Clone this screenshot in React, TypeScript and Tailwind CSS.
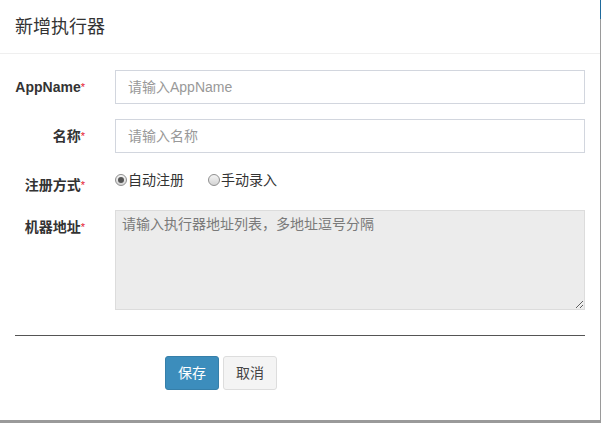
import { useState } from 'react'

const FONT = "font-['Liberation_Sans','Noto_Sans_CJK_SC',sans-serif]"

function Label({ text }: { text: string }) {
  return (
    <div className="w-[70px] shrink-0 pt-[7px] text-right text-[14px] font-bold leading-[20px] text-[#333]">
      {text}
      <span className="text-[#e3162f] text-[11px] align-top font-normal">*</span>
    </div>
  )
}

function Radio({ checked, label, onClick }: { checked: boolean; label: string; onClick: () => void }) {
  return (
    <button type="button" onClick={onClick} className="flex items-center text-[14px] text-[#333] leading-[20px]">
      <span className="w-[12px] h-[12px] rounded-full border border-[#8f8f8f] bg-gradient-to-b from-[#f4f4f4] to-[#d4d4d4] flex items-center justify-center mr-[1px]">
        {checked && <span className="w-[6px] h-[6px] rounded-full bg-[#555]" />}
      </span>
      {label}
    </button>
  )
}

export default function App() {
  const [mode, setMode] = useState<'auto' | 'manual'>('auto')

  return (
    <div className={`w-[601px] h-[423px] bg-white flex flex-col ${FONT}`}>
      <div className="flex flex-1 min-h-0">
        <div className="w-[600px] flex flex-col">
          {/* 标题 */}
          <div className="h-[54px] border-b border-[#efefef] px-[15px] flex items-center">
            <h4 className="text-[18px] text-[#333] leading-[20px] mt-[1px]">新增执行器</h4>
          </div>

          {/* 表单 */}
          <div className="px-[15px] pt-[16px]">
            <div className="flex gap-[30px]">
              <Label text="AppName" />
              <input
                className="flex-1 h-[34px] border border-[#d2d6de] px-[12px] text-[14px] text-[#555] placeholder:text-[#999] outline-none"
                placeholder="请输入AppName"
              />
            </div>
            <div className="flex gap-[30px] mt-[15px]">
              <Label text="名称" />
              <input
                className="flex-1 h-[34px] border border-[#d2d6de] px-[12px] text-[14px] text-[#555] placeholder:text-[#999] outline-none"
                placeholder="请输入名称"
              />
            </div>
            <div className="flex gap-[30px] mt-[15px] h-[42px]">
              <Label text="注册方式" />
              <div className="flex items-start gap-[24px] pt-[2px]">
                <Radio checked={mode === 'auto'} label="自动注册" onClick={() => setMode('auto')} />
                <Radio checked={mode === 'manual'} label="手动录入" onClick={() => setMode('manual')} />
              </div>
            </div>
            <div className="flex gap-[30px]">
              <Label text="机器地址" />
              <textarea
                readOnly
                className="flex-1 h-[100px] bg-[#ececec] border border-[#dcdcdc] px-[6px] py-[3px] text-[14px] leading-[20px] text-[#555] placeholder:text-[#7a7a7a] outline-none"
                placeholder="请输入执行器地址列表，多地址逗号分隔"
              />
            </div>

            <hr className="mt-[25px] border-t border-[#555]" />

            <div className="flex gap-[4px] mt-[20px] pl-[150px]">
              <button
                type="button"
                className="w-[54px] h-[34px] rounded-[3px] bg-[#3c8dbc] border border-[#367fa9] text-white text-[14px]"
              >
                保存
              </button>
              <button
                type="button"
                className="w-[54px] h-[34px] rounded-[3px] bg-[#f4f4f4] border border-[#ddd] text-[#444] text-[14px]"
              >
                取消
              </button>
            </div>
          </div>
        </div>
        <div className="w-[1px] flex flex-col">
          <div className="h-[19px] bg-[#1f6a9c]" />
          <div className="flex-1 bg-[#9a9a9a]" />
        </div>
      </div>
      <div className="h-[3px] bg-[#9a9a9a]" />
    </div>
  )
}
